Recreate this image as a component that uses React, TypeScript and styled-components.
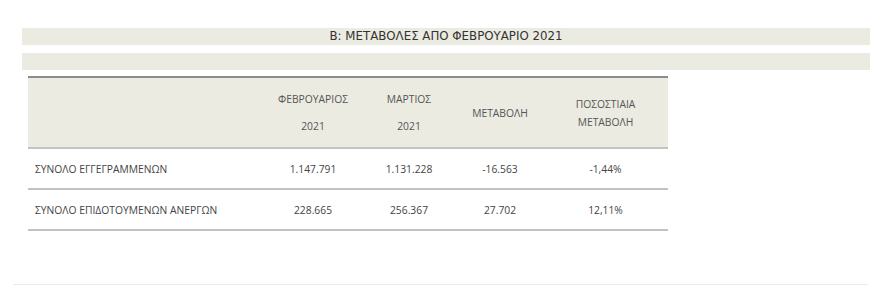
import React from 'react'
import styled, { createGlobalStyle } from 'styled-components'

const beige = '#ecebe2'

const GlobalStyle = createGlobalStyle`
  body {
    margin: 0;
    background: #fff;
  }
`

const Page = styled.div`
  width: 880px;
  height: 286px;
  padding-top: 28px;
  box-sizing: border-box;
  display: flex;
  flex-direction: column;
`

const Section = styled.div`
  margin: 0 10px 0 22px;
  display: flex;
  flex-direction: column;
  gap: 8px;
`

const Bar = styled.div`
  height: 17px;
  background: ${beige};
  font-family: 'DejaVu Sans', Verdana, sans-serif;
  font-size: 11.8px;
  line-height: 17px;
  color: #333;
  text-align: center;
`

const Table = styled.table`
  width: 640px;
  margin: 6px 0 0 28px;
  border-collapse: collapse;
  font-family: 'Open Sans', 'Noto Sans', sans-serif;
  font-size: 10.3px;
  color: #444;

  thead tr {
    background: ${beige};
    border-top: 2px solid #8c8c8a;
    border-bottom: 2px solid #c4c3bd;
  }

  tbody tr {
    border-bottom: 2px solid #c2c2c0;
  }
`

const Th = styled.th<{ $w: number }>`
  width: ${(p) => p.$w}px;
  height: 69px;
  padding: 0;
  font-weight: normal;
  text-align: center;
  color: #555;
`

const Stack = styled.div<{ $gap: number }>`
  display: flex;
  flex-direction: column;
  align-items: center;
  gap: ${(p) => p.$gap}px;
`

const Td = styled.td<{ $label?: boolean }>`
  height: 39px;
  padding: 0 0 0 ${(p) => (p.$label ? 7 : 0)}px;
  text-align: ${(p) => (p.$label ? 'left' : 'center')};
`

const Footer = styled.div`
  margin: auto 12px 1px 13px;
  height: 1px;
  background: ${beige};
`

const rows = [
  ['ΣΥΝΟΛΟ ΕΓΓΕΓΡΑΜΜΕΝΩΝ', '1.147.791', '1.131.228', '-16.563', '-1,44%'],
  ['ΣΥΝΟΛΟ ΕΠΙΔΟΤΟΥΜΕΝΩΝ ΑΝΕΡΓΩΝ', '228.665', '256.367', '27.702', '12,11%'],
]

const App = () => (
  <Page>
    <GlobalStyle />
    <Section>
      <Bar>B: ΜΕΤΑΒΟΛΕΣ ΑΠΟ ΦΕΒΡΟΥΑΡΙΟ 2021</Bar>
      <Bar />
    </Section>
    <Table>
      <thead>
        <tr>
          <Th $w={237} />
          <Th $w={96}>
            <Stack $gap={13}>
              <span>ΦΕΒΡΟΥΑΡΙΟΣ</span>
              <span>2021</span>
            </Stack>
          </Th>
          <Th $w={96}>
            <Stack $gap={13}>
              <span>ΜΑΡΤΙΟΣ</span>
              <span>2021</span>
            </Stack>
          </Th>
          <Th $w={86}>ΜΕΤΑΒΟΛΗ</Th>
          <Th $w={125}>
            <Stack $gap={4}>
              <span>ΠΟΣΟΣΤΙΑΙΑ</span>
              <span>ΜΕΤΑΒΟΛΗ</span>
            </Stack>
          </Th>
        </tr>
      </thead>
      <tbody>
        {rows.map((r) => (
          <tr key={r[0]}>
            {r.map((c, i) => (
              <Td key={i} $label={i === 0}>
                {c}
              </Td>
            ))}
          </tr>
        ))}
      </tbody>
    </Table>
    <Footer />
  </Page>
)

export default App
